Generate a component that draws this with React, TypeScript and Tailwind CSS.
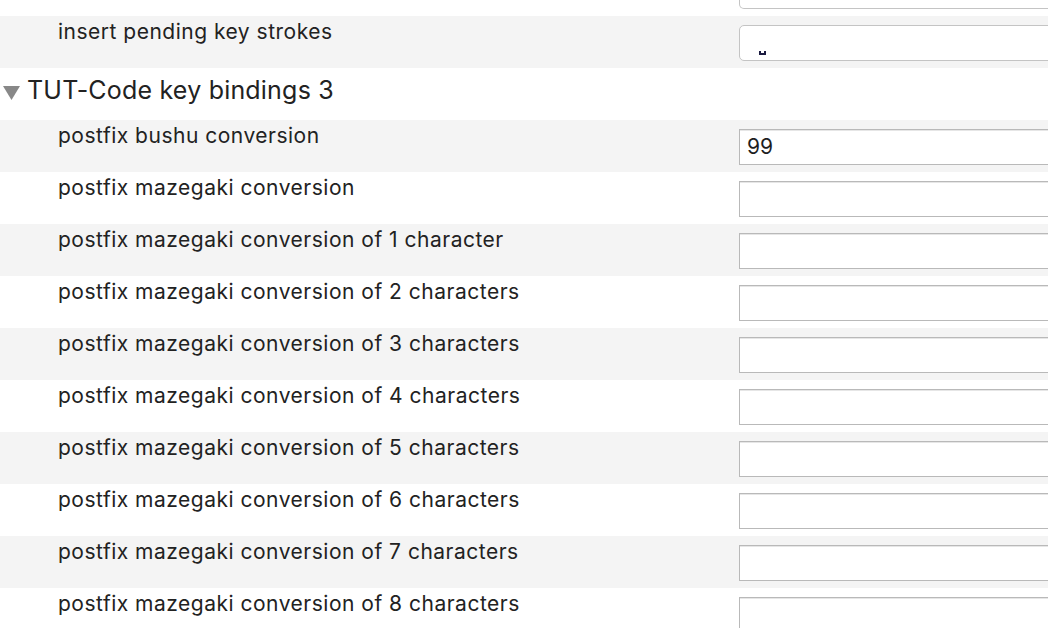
import React from "react";

const rows = [
  { label: "postfix bushu conversion", value: "99" },
  { label: "postfix mazegaki conversion", value: "" },
  { label: "postfix mazegaki conversion of 1 character", value: "" },
  { label: "postfix mazegaki conversion of 2 characters", value: "" },
  { label: "postfix mazegaki conversion of 3 characters", value: "" },
  { label: "postfix mazegaki conversion of 4 characters", value: "" },
  { label: "postfix mazegaki conversion of 5 characters", value: "" },
  { label: "postfix mazegaki conversion of 6 characters", value: "" },
  { label: "postfix mazegaki conversion of 7 characters", value: "" },
  { label: "postfix mazegaki conversion of 8 characters", value: "" },
];

function Row({ label, gray, children }: { label: string; gray: boolean; children: React.ReactNode }) {
  return (
    <div className={`grid h-[52px] shrink-0 grid-cols-[739px_400px] ${gray ? "bg-[#f4f4f4]" : "bg-white"}`}>
      <div className="pl-[58px] pt-[4px] text-[21px] leading-[24px] tracking-[0.5px] text-[#222]">
        {label}
      </div>
      <div className="pt-[9px]">{children}</div>
    </div>
  );
}

export default function App() {
  return (
    <div className="flex h-[628px] w-[1048px] flex-col overflow-hidden bg-white text-[#222]" style={{ fontFamily: 'Inter, "Liberation Sans", Arial, sans-serif' }}>
      <div className="grid h-[16px] shrink-0 grid-cols-[739px_400px] items-start">
        <div />
        <div className="h-[9px] rounded-b-[5px] border-x border-b border-[#c4c4c4]" />
      </div>
      <Row label="insert pending key strokes" gray>
        <div className="flex h-[36px] items-end rounded-[5px] border border-[#c4c4c4] bg-white pb-[5px] pl-[19px]">
          <span className="h-[4px] w-[7px] border-x-2 border-b-2 border-[#1a1a40]" />
        </div>
      </Row>
      <div className="flex h-[52px] shrink-0 items-center bg-white">
        <svg width="18" height="16" viewBox="0 0 18 16" className="ml-[3px] mb-[2px]">
          <polygon points="0,1 17,1 8.5,15" fill="#888888" />
        </svg>
        <div className="ml-[6px] mb-[9px] text-[25px] leading-[30px] tracking-[0.2px] text-[#222]">TUT-Code key bindings 3</div>
      </div>
      {rows.map((r, i) => (
        <Row key={i} label={r.label} gray={i % 2 === 0}>
          <div className="flex h-[36px] items-center border border-[#b9b9b9] bg-white px-[7px] text-[21px] text-[#1e1e1e] shadow-[inset_0_1px_0_#e6e6e6]">
            {r.value}
          </div>
        </Row>
      ))}
    </div>
  );
}
